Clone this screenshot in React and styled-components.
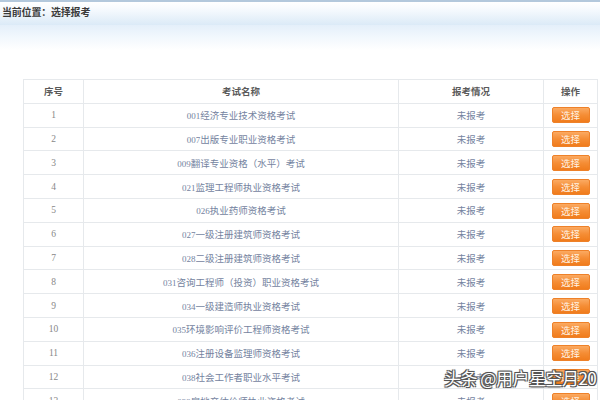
import React from "react";
import styled, { createGlobalStyle } from "styled-components";

const Global = createGlobalStyle`
  html, body { margin: 0; padding: 0; background: #fff; }
  body { font-family: "Noto Sans CJK SC", "Noto Sans", sans-serif; overflow: hidden; }
`;

const Page = styled.div`
  position: relative;
  width: 600px;
  height: 400px;
  overflow: hidden;
  background: #fff;
`;

const Breadcrumb = styled.div`
  height: 25px;
  border-top: 2px solid #b3c8dc;
  background: linear-gradient(#ffffff 0%, #f3f8fd 40%, #dbeaf7 100%);
  display: flex;
  align-items: flex-start;
  padding: 2px 0 0 2px;
  box-sizing: border-box;
  font-size: 10px;
  font-weight: 700;
  color: #3a3a3a;
  letter-spacing: -0.2px;
`;

const Fade = styled.div`
  height: 25px;
  background: linear-gradient(#e4effa 0%, #f2f8fd 50%, #ffffff 100%);
`;

const TableWrap = styled.div`
  padding: 29px 3px 0 23px;
`;

const Table = styled.table`
  width: 575px;
  border-collapse: collapse;
  table-layout: fixed;
  font-size: 9.5px;
`;

const Th = styled.th`
  height: 22.8px;
  border: 1px solid #e6e9ec;
  font-weight: 700;
  color: #5a5a5a;
  text-align: center;
  padding: 0;
  width: ${(p) => p.$w || "auto"};
`;

const Td = styled.td`
  height: 22.8px;
  border: 1px solid #e6e9ec;
  text-align: center;
  padding: 0;
  color: ${(p) => p.$color || "#7483a0"};
  font-family: ${(p) =>
    p.$serif
      ? '"Liberation Serif", "Noto Sans CJK SC", serif'
      : '"Noto Sans CJK SC", "Noto Sans", sans-serif'};
`;

const Num = styled.span`
  font-family: "Liberation Serif", serif;
  font-size: 9px;
`;

const Button = styled.span`
  display: inline-flex;
  align-items: center;
  justify-content: center;
  width: 38px;
  height: 16px;
  box-sizing: border-box;
  border-radius: 2px;
  border: 1px solid #ee8129;
  background: linear-gradient(#fbaa62 0%, #f58d35 50%, #f07c1c 100%);
  color: #fff3e4;
  font-size: 9.5px;
  vertical-align: middle;
`;

const Watermark = styled.div`
  position: absolute;
  left: 444px;
  top: 365px;
  font-size: 17px;
  font-family: "Noto Sans CJK SC", sans-serif;
  color: #fff;
  letter-spacing: -0.5px;
  text-shadow: -1px -1px 0 #555, 1px -1px 0 #555, -1px 1px 0 #555, 1px 1px 0 #555,
    0 0 2px #222;
`;

const rows = [
  ["001", "经济专业技术资格考试"],
  ["007", "出版专业职业资格考试"],
  ["009", "翻译专业资格（水平）考试"],
  ["021", "监理工程师执业资格考试"],
  ["026", "执业药师资格考试"],
  ["027", "一级注册建筑师资格考试"],
  ["028", "二级注册建筑师资格考试"],
  ["031", "咨询工程师（投资）职业资格考试"],
  ["034", "一级建造师执业资格考试"],
  ["035", "环境影响评价工程师资格考试"],
  ["036", "注册设备监理师资格考试"],
  ["038", "社会工作者职业水平考试"],
  ["039", "房地产估价师执业资格考试"],
];

export default function App() {
  return (
    <Page>
      <Global />
      <Breadcrumb>当前位置：选择报考</Breadcrumb>
      <Fade />
      <TableWrap>
        <Table>
          <thead>
            <tr>
              <Th $w="59px">序号</Th>
              <Th $w="314px">考试名称</Th>
              <Th $w="144px">报考情况</Th>
              <Th>操作</Th>
            </tr>
          </thead>
          <tbody>
            {rows.map(([code, name], i) => (
              <tr key={code}>
                <Td $serif $color="#888">{i + 1}</Td>
                <Td>
                  <Num>{code}</Num>
                  {name}
                </Td>
                <Td>未报考</Td>
                <Td>
                  <Button>选择</Button>
                </Td>
              </tr>
            ))}
          </tbody>
        </Table>
      </TableWrap>
      <Watermark>头条 @用户星空月20</Watermark>
    </Page>
  );
}
